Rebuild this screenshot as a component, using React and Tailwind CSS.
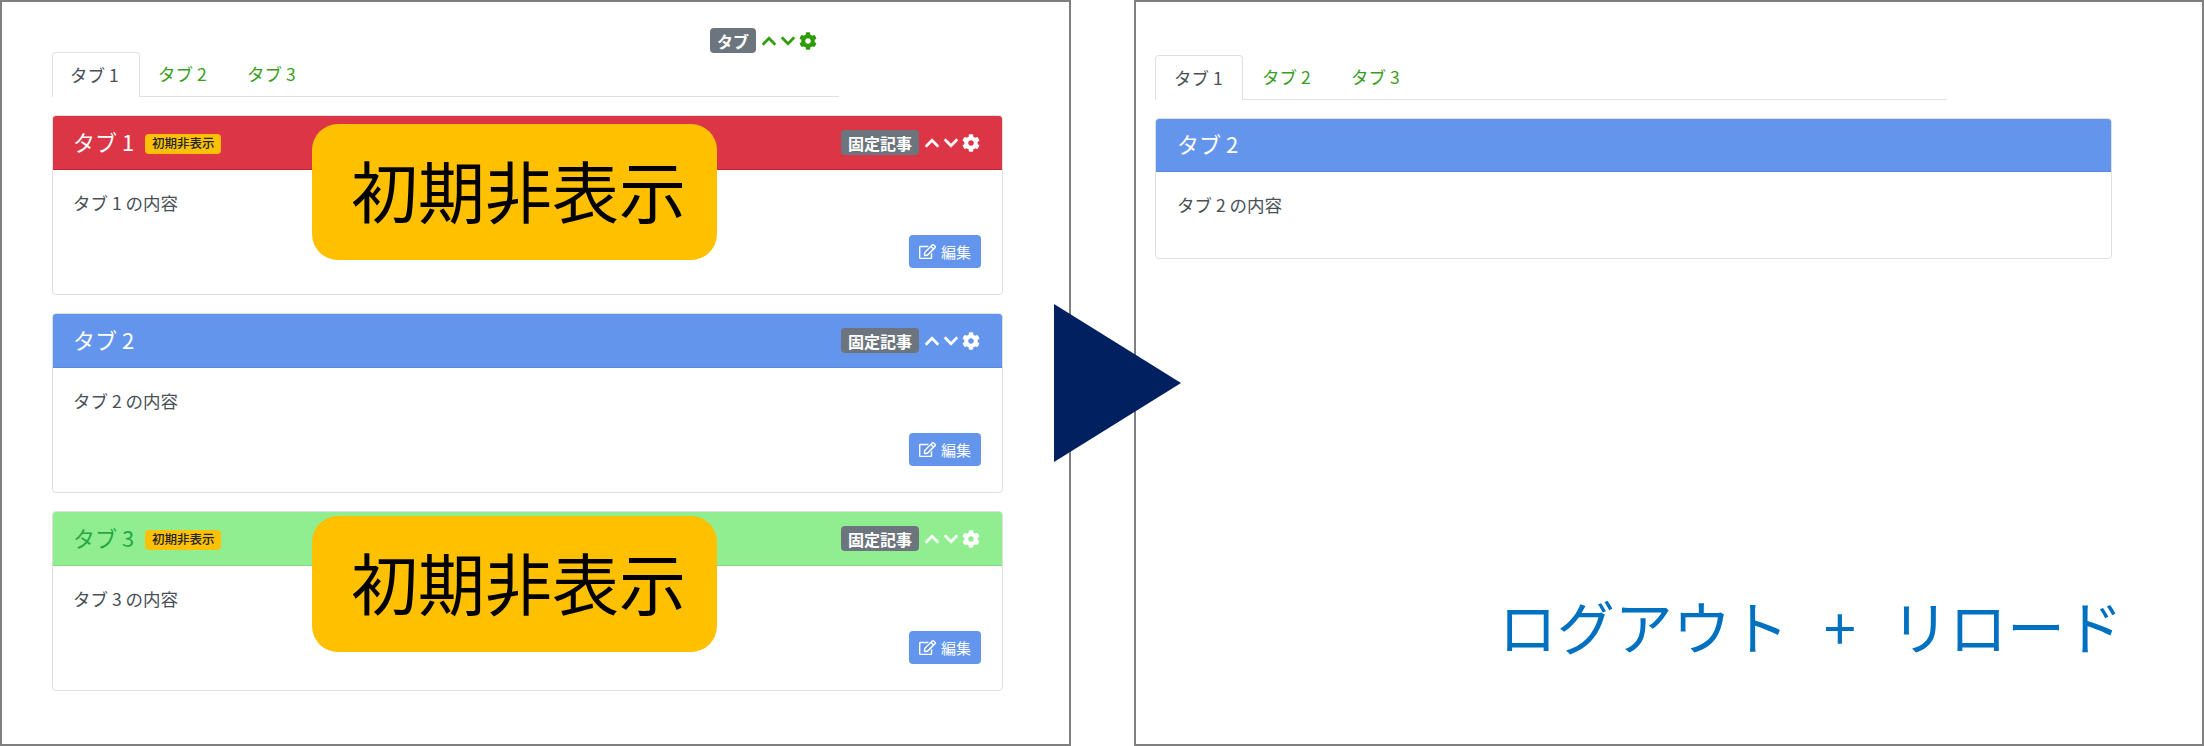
import React from 'react';
import { FaChevronUp, FaChevronDown, FaCog, FaRegEdit } from 'react-icons/fa';

const cards = [
  { id: 1, header: 'bg-[#dc3545] border-[#c82333]', title: 'text-white', hidden: true, body: 'タブ 1 の内容' },
  { id: 2, header: 'bg-[#6495ed] border-[#5b88dd]', title: 'text-white', hidden: false, body: 'タブ 2 の内容' },
  { id: 3, header: 'bg-[#90ee90] border-[#7fd87f]', title: 'text-[#28a745]', hidden: true, body: 'タブ 3 の内容' },
];

const Tabs = ({ pad }) => (
  <div className="flex h-[45px] border-b border-[#dee2e6] text-[17.5px] leading-6">
    <div className={`h-[45px] w-[88px] pt-[10px] bg-white border border-b-0 border-[#dee2e6] rounded-t text-[#495057] ${pad ? 'pl-[18px]' : 'pl-[17px]'}`}>タブ 1</div>
    <div className={`w-[89px] pt-[10px] text-[#3a9d23] ${pad ? 'pl-[19px]' : 'pl-[18px]'}`}>タブ 2</div>
    <div className={`w-[88px] pt-[10px] text-[#3a9d23] ${pad ? 'pl-[19px]' : 'pl-[18px]'}`}>タブ 3</div>
  </div>
);

const Controls = () => (
  <>
    <FaChevronUp className="ml-[5px] w-[16px] h-[16px]" stroke="currentColor" strokeWidth={12} />
    <FaChevronDown className="ml-[3px] w-[16px] h-[16px]" stroke="currentColor" strokeWidth={12} />
    <FaCog className="ml-[3px] w-[18px] h-[18px]" />
  </>
);

const Card = ({ card, controls }) => (
  <div className="bg-white border border-[#dfdfdf] rounded overflow-hidden">
    <div className={`flex items-center justify-between pr-[22px] border-b ${card.header} ${controls ? 'h-[54px] pl-[20px]' : 'h-[53px] pl-[21px]'}`}>
      <div className="flex items-center">
        <span className={`text-[22px] pb-[3px] ${card.title}`}>タブ {card.id}</span>
        {card.hidden && (
          <span className="ml-[11px] mt-[2px] h-[20px] w-[76px] flex items-center justify-center rounded bg-[#ffc107] text-[#212529] text-[12.5px] font-medium">初期非表示</span>
        )}
      </div>
      {controls && (
        <div className="flex items-center text-white">
          <span className="h-[25px] w-[78px] flex items-center justify-center rounded bg-[#6c757d] text-[16px] font-bold">固定記事</span>
          <Controls />
        </div>
      )}
    </div>
    <div className={`pr-[21px] pt-[21px] text-[#495057] text-[17.5px] leading-6 ${controls ? 'h-[124px] pl-[20px]' : 'h-[86px] pl-[21px]'}`}>
      <p>{card.body}</p>
      {controls && (
        <div className="flex justify-end mt-[20px]">
          <button className="h-[33px] w-[72px] flex items-center justify-center gap-[5px] rounded bg-[#6495ed] text-white text-[15px]">
            <FaRegEdit className="w-[17px] h-[17px]" />
            編集
          </button>
        </div>
      )}
    </div>
  </div>
);

const Callout = ({ className }) => (
  <div className={`absolute left-[312px] w-[405px] h-[136px] flex items-center justify-center pl-[8px] pb-[5px] rounded-[26px] bg-[#ffc000] text-black text-[67px] ${className}`}>
    初期非表示
  </div>
);

export default function App() {
  return (
    <div className="relative w-[2204px] h-[746px] flex justify-between bg-white font-['Noto_Sans_CJK_JP','Liberation_Sans',sans-serif]">
      <div className="w-[1071px] h-[746px] border-2 border-[#7f7f7f] pl-[50px] pt-[27px]">
        <div className="w-[787px]">
          <div className="h-[23px] flex items-center justify-end pr-[22px] text-[#2e9b0a]">
            <span className="h-[25px] w-[46px] flex items-center justify-center rounded bg-[#6c757d] text-white text-[16px] font-bold">タブ</span>
            <Controls />
          </div>
          <Tabs />
        </div>
        <div className="w-[951px] mt-[18px] flex flex-col gap-[18px]">
          {cards.map((card) => <Card key={card.id} card={card} controls />)}
        </div>
      </div>

      <div className="w-[1070px] h-[746px] border-2 border-[#7f7f7f] pl-[19px] pt-[53px] flex flex-col">
        <div className="w-[792px]"><Tabs pad /></div>
        <div className="w-[957px] mt-[18px]"><Card card={cards[1]} /></div>
        <div className="mt-auto self-end mb-[79px] mr-[79px] text-[#0070c0] text-[58px] leading-[80px] [word-spacing:22px]">ログアウト + リロード</div>
      </div>

      <Callout className="top-[124px]" />
      <Callout className="top-[516px]" />
      <svg className="absolute left-[1054px] top-[304px]" width="127" height="158" viewBox="0 0 127 158">
        <polygon points="0,0 127,79 0,158" fill="#002060" />
      </svg>
    </div>
  );
}
